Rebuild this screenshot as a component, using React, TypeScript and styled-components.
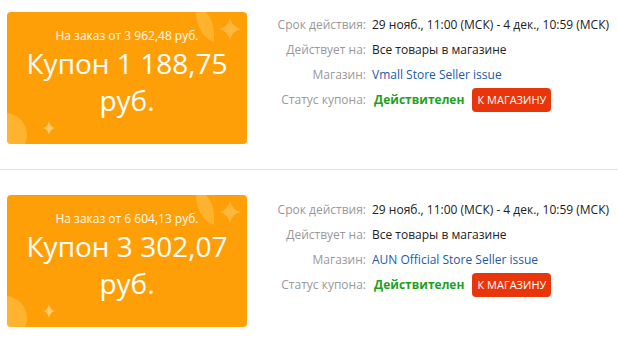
import React from "react";
import styled, { createGlobalStyle } from "styled-components";

const Global = createGlobalStyle`
  html, body { margin: 0; padding: 0; background: #fff; }
  body { font-family: "Open Sans", "Noto Sans", sans-serif; }
`;

const List = styled.div`
  width: 618px;
  display: flex;
  flex-direction: column;
`;

const Item = styled.div<{ $first?: boolean }>`
  display: flex;
  align-items: flex-start;
  padding: ${(p) => (p.$first ? "12px 0 25px 7px" : "25px 0 16px 7px")};
  border-top: ${(p) => (p.$first ? "none" : "1px solid #e3e3e3")};
`;

const Card = styled.div`
  position: relative;
  overflow: hidden;
  width: 240px;
  height: 132px;
  border-radius: 4px;
  background: #ff9f08;
  color: #fff;
  display: flex;
  flex-direction: column;
  align-items: center;
  box-sizing: border-box;
  padding-top: 15px;
  text-align: center;
`;

const Deco = styled.svg`
  position: absolute;
  left: 0;
  top: 0;
  pointer-events: none;
`;

const MinOrder = styled.div`
  position: relative;
  font-size: 12px;
  line-height: 17px;
  opacity: 0.95;
`;

const Amount = styled.div`
  position: relative;
  font-size: 28px;
  line-height: 37px;
  margin-top: 1px;
  padding: 0 14px;
`;

const Info = styled.div<{ $offset: number }>`
  margin-left: 23px;
  margin-top: ${(p) => p.$offset}px;
  display: grid;
  grid-template-columns: 96px auto;
  column-gap: 6px;
  font-size: 12px;
`;

const Label = styled.div`
  color: #999;
  text-align: right;
  line-height: 25px;
  white-space: nowrap;
`;

const Value = styled.div<{ $tone?: "link" }>`
  line-height: 25px;
  white-space: nowrap;
  display: flex;
  align-items: center;
  color: ${(p) => (p.$tone === "link" ? "#1d5aa8" : "#222")};
`;

const Status = styled.span`
  color: #1fa11f;
  font-weight: 700;
  margin-left: 2px;
`;

const ShopButton = styled.button`
  margin-left: 8px;
  height: 24px;
  width: 79px;
  border: none;
  border-radius: 4px;
  background: #e8360a;
  color: #fff;
  font-family: "Open Sans", "Noto Sans", sans-serif;
  font-size: 11px;
  padding: 0;
  cursor: pointer;
`;

const Decorations = () => (
  <Deco width="240" height="132" viewBox="0 0 240 132">
    <path d="M189 0 h10 q8 9 8 22 v8 q-10 -4 -14 -13 q-4 -8 -4 -17 z" fill="#ffc24a" opacity="0.6" />
    <path d="M199 0 q8 9 8 22 v8 q-5 -3 -8 -8 z" fill="#ffb22a" opacity="0.5" />
    <path d="M223 6 Q225 15 234 17 Q225 19 223 28 Q221 19 212 17 Q221 15 223 6 Z" fill="#ffc45a" opacity="0.65" />
    <circle cx="-2" cy="123" r="22" fill="#ffc24a" opacity="0.6" />
    <path d="M42 109 Q43 115 48 116 Q43 117 42 123 Q41 117 36 116 Q41 115 42 109 Z" fill="#ffd27a" opacity="0.85" />
  </Deco>
);

type Coupon = { min: string; amount: string; shop: string };

const coupons: Coupon[] = [
  { min: "3 962,48", amount: "1 188,75", shop: "Vmall Store Seller issue" },
  { min: "6 604,13", amount: "3 302,07", shop: "AUN Official Store Seller issue" },
];

export default function App() {
  return (
    <List>
      <Global />
      {coupons.map((c, i) => (
        <Item key={i} $first={i === 0}>
          <Card>
            <Decorations />
            <MinOrder>На заказ от {c.min} руб.</MinOrder>
            <Amount>Купон {c.amount} руб.</Amount>
          </Card>
          <Info $offset={i === 0 ? 0 : 2}>
            <Label>Срок действия:</Label>
            <Value>29 нояб., 11:00 (МСК) - 4 дек., 10:59 (МСК)</Value>
            <Label>Действует на:</Label>
            <Value>Все товары в магазине</Value>
            <Label>Магазин:</Label>
            <Value $tone="link">{c.shop}</Value>
            <Label>Статус купона:</Label>
            <Value>
              <Status>Действителен</Status>
              <ShopButton>К МАГАЗИНУ</ShopButton>
            </Value>
          </Info>
        </Item>
      ))}
    </List>
  );
}
